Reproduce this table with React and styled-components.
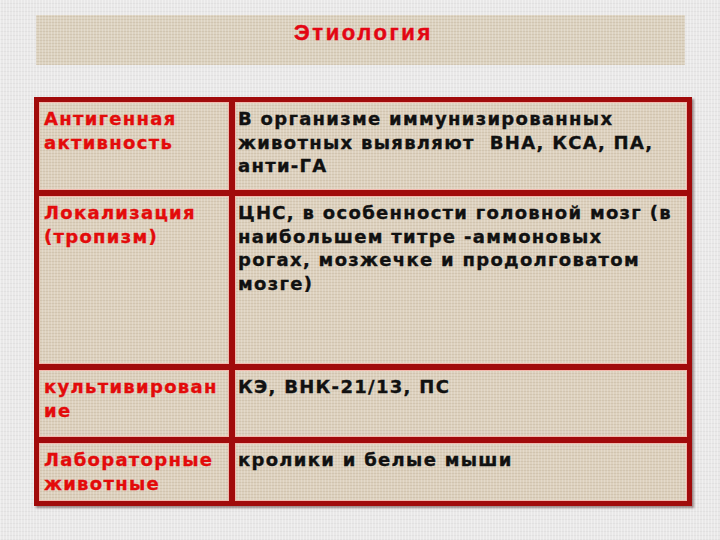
import React from "react";
import styled, { createGlobalStyle } from "styled-components";

const rows = [
  {
    label: ["Антигенная", "активность"],
    text: ["В организме иммунизированных", "животных выявляют  ВНА, КСА, ПА,", "анти-ГА"],
    height: 88,
  },
  {
    label: ["Локализация", "(тропизм)"],
    text: [
      "ЦНС, в особенности головной мозг (в",
      "наибольшем титре -аммоновых",
      "рогах, мозжечке и продолговатом",
      "мозге)",
    ],
    height: 168,
  },
  { label: ["культивирован", "ие"], text: ["КЭ, ВНК-21/13, ПС"], height: 67 },
  { label: ["Лабораторные", "животные"], text: ["кролики и белые мыши"], height: 58 },
];

export default function App() {
  return (
    <>
      <GlobalStyle />
      <Page>
        <Banner>
          <Title>Этиология</Title>
        </Banner>
        <Table $rows={rows.map((r) => `${r.height}px`).join(" ")}>
          {rows.map((r) => (
            <React.Fragment key={r.label.join()}>
              <Cell>
                {r.label.map((line) => (
                  <Label key={line}>{line}</Label>
                ))}
              </Cell>
              <Cell>
                {r.text.map((line) => (
                  <Text key={line}>{line}</Text>
                ))}
              </Cell>
            </React.Fragment>
          ))}
        </Table>
      </Page>
    </>
  );
}

const GlobalStyle = createGlobalStyle`
  html, body {
    margin: 0;
    padding: 0;
  }
  body {
    width: 720px;
    height: 540px;
    overflow: hidden;
    background-color: #e9e8e8;
    background-image:
      repeating-linear-gradient(90deg, rgba(255,255,255,0.35) 0 1px, transparent 1px 3px),
      repeating-linear-gradient(0deg, rgba(200,200,200,0.25) 0 1px, transparent 1px 4px);
  }
`;

const Page = styled.div`
  width: 720px;
  height: 540px;
  box-sizing: border-box;
  padding: 15px 0 0 34px;
  display: flex;
  flex-direction: column;
  align-items: flex-start;
`;

const Banner = styled.div`
  margin-left: 2px;
  width: 649px;
  height: 50px;
  box-sizing: border-box;
  padding-top: 6px;
  text-align: center;
  background-color: #dcd2c0;
  background-image:
    repeating-linear-gradient(90deg, rgba(255,255,255,0.22) 0 1px, transparent 1px 3px),
    repeating-linear-gradient(0deg, rgba(160,140,110,0.18) 0 1px, transparent 1px 3px);
`;

const Title = styled.h1`
  margin: 0 0 0 6px;
  font-family: "Liberation Sans", Arial, sans-serif;
  font-weight: 700;
  font-size: 22px;
  line-height: 24px;
  letter-spacing: 2.6px;
  -webkit-text-stroke: 0.5px #e30613;
  color: #e30613;
`;

const Table = styled.div`
  margin-top: 32px;
  width: 658px;
  box-sizing: border-box;
  border: 5px solid #a10b0b;
  background: #a10b0b;
  display: grid;
  grid-template-columns: 190px 452px;
  grid-template-rows: ${(p) => p.$rows};
  gap: 6px;
  box-shadow: 2px 2px 2px rgba(60, 20, 20, 0.45);
`;

const Cell = styled.div`
  box-sizing: border-box;
  padding: 5px 0 0 5px;
  background-color: #ddd1be;
  background-image:
    repeating-linear-gradient(90deg, rgba(255,255,255,0.2) 0 1px, transparent 1px 3px),
    repeating-linear-gradient(0deg, rgba(150,130,100,0.16) 0 1px, transparent 1px 3px);
  box-shadow: inset 1px 1px 0 #f2b9ad, inset -1px -1px 0 #f2b9ad;
  overflow: hidden;
`;

const Line = styled.div`
  font-family: "DejaVu Sans", Verdana, sans-serif;
  font-weight: 700;
  font-size: 18px;
  line-height: 23.5px;
  letter-spacing: 1.3px;
  -webkit-text-stroke: 0.35px currentColor;
  white-space: pre;
`;

const Label = styled(Line)`
  color: #e30b0b;
`;

const Text = styled(Line)`
  margin-left: -2px;
  color: #111;
`;
